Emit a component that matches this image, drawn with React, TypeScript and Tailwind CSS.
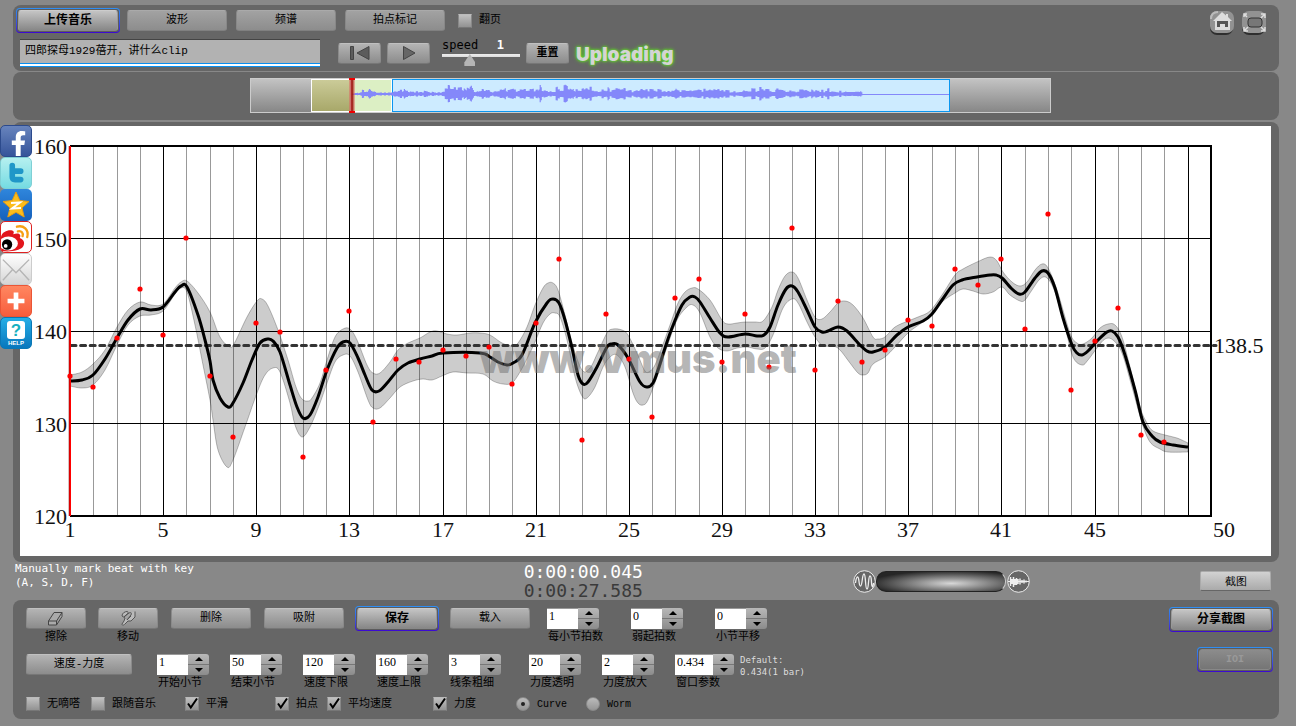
import { useState } from 'react';
import type { ReactNode } from 'react';
import { FaFacebookF } from 'react-icons/fa';

type Point = [number, number];

// Tempo curve, one point every few pixels of the chart
const tempoCurve: Point[] = [
  [70, 381], [82, 380], [93, 375], [105, 359], [117, 338], [128, 320], [140, 309], [151, 310], [163, 307],
  [175, 292], [181, 286], [187, 287], [198, 315], [205, 340], [210, 361], [213, 380], [220, 398], [228, 407],
  [233, 403], [243, 383], [252, 360], [260, 343], [268, 339], [273, 341], [280, 352], [290, 385], [297, 407],
  [303, 418], [310, 415], [318, 397], [327, 370], [337, 348], [343, 342], [350, 343], [358, 358], [365, 375],
  [372, 390], [379, 391], [388, 382], [398, 370], [408, 363], [420, 359], [432, 356], [443, 353], [480, 353],
  [490, 357], [498, 362], [507, 365], [513, 363], [522, 355], [535, 323], [547, 303], [553, 299], [559, 303],
  [565, 320], [572, 348], [578, 375], [583, 384], [588, 382], [597, 367], [607, 347], [612, 344], [618, 345],
  [628, 358], [640, 382], [647, 387], [653, 383], [658, 370], [665, 348], [672, 328], [682, 305], [690, 297],
  [695, 297], [700, 302], [710, 318], [720, 333], [728, 337], [745, 334], [757, 336], [764, 335], [770, 327],
  [778, 305], [786, 289], [792, 286], [798, 292], [807, 310], [815, 327], [822, 332], [828, 331], [838, 327],
  [847, 331], [860, 345], [867, 351], [873, 352], [885, 347], [897, 335], [908, 327], [923, 321], [932, 314],
  [942, 300], [953, 285], [962, 280], [977, 277], [990, 275], [996, 275], [1002, 278], [1012, 289], [1019, 294],
  [1025, 292], [1035, 278], [1042, 271], [1048, 273], [1055, 288], [1063, 318], [1072, 345], [1077, 353],
  [1082, 355], [1088, 351], [1097, 341], [1107, 332], [1112, 331], [1118, 337], [1125, 355], [1135, 390],
  [1143, 422], [1152, 436], [1160, 442], [1173, 445], [1188, 447],
];

// Loudness band around the curve
const bandTop: Point[] = [
  [70, 375], [82, 372], [93, 364], [105, 350], [117, 327], [128, 310], [140, 302], [151, 305], [163, 304],
  [175, 288], [181, 282], [187, 281], [198, 293], [210, 312], [220, 337], [230, 347], [235, 342], [247, 317],
  [257, 301], [262, 299], [268, 306], [278, 330], [288, 360], [296, 387], [302, 399], [308, 401], [312, 398],
  [320, 383], [327, 360], [335, 337], [343, 329], [350, 329], [357, 340], [367, 365], [373, 373], [380, 373],
  [390, 362], [398, 350], [408, 343], [420, 338], [430, 332], [437, 331], [447, 334], [457, 335], [470, 333],
  [480, 333], [490, 335], [502, 343], [512, 346], [518, 343], [527, 327], [535, 305], [543, 288], [548, 283],
  [553, 283], [558, 290], [565, 315], [572, 343], [582, 370], [590, 368], [598, 352], [607, 333], [613, 329],
  [622, 330], [628, 335], [637, 353], [645, 371], [650, 371], [655, 365], [662, 347], [670, 325], [678, 303],
  [685, 292], [692, 288], [698, 289], [710, 300], [722, 320], [728, 324], [737, 323], [745, 322], [755, 322],
  [763, 321], [772, 307], [778, 290], [785, 276], [792, 272], [798, 278], [807, 300], [815, 317], [822, 319],
  [830, 312], [838, 303], [845, 301], [853, 305], [863, 318], [873, 337], [878, 339], [885, 337], [895, 327],
  [908, 321], [918, 317], [930, 311], [942, 295], [955, 275], [963, 269], [977, 262], [990, 257], [997, 261],
  [1003, 272], [1012, 282], [1020, 286], [1027, 282], [1035, 270], [1042, 264], [1048, 268], [1057, 290],
  [1070, 333], [1077, 343], [1083, 344], [1092, 338], [1100, 328], [1108, 324], [1115, 325], [1122, 337],
  [1130, 367], [1140, 407], [1147, 423], [1153, 431], [1165, 435], [1177, 438], [1188, 443],
];

const bandBottom: Point[] = [
  [70, 386], [82, 388], [93, 385], [105, 370], [117, 345], [128, 325], [140, 316], [151, 315], [163, 311],
  [175, 294], [181, 288], [187, 292], [195, 325], [202, 360], [210, 400], [213, 420], [218, 450], [227, 467],
  [233, 460], [245, 427], [257, 393], [265, 375], [273, 368], [280, 372], [290, 403], [295, 425], [302, 437],
  [310, 427], [320, 403], [327, 383], [335, 362], [343, 355], [350, 356], [358, 372], [368, 400], [373, 408],
  [380, 408], [390, 398], [400, 387], [413, 381], [423, 379], [432, 380], [442, 376], [453, 372], [467, 373],
  [483, 374], [493, 381], [503, 384], [512, 383], [520, 372], [528, 357], [535, 342], [543, 323], [550, 314],
  [555, 313], [560, 317], [567, 340], [575, 377], [582, 396], [587, 398], [595, 387], [603, 367], [610, 357],
  [617, 355], [625, 367], [633, 393], [638, 403], [643, 405], [648, 400], [657, 377], [667, 347], [677, 320],
  [687, 307], [693, 305], [700, 313], [710, 337], [718, 348], [727, 351], [737, 348], [747, 347], [757, 349],
  [765, 348], [773, 335], [783, 308], [792, 299], [798, 303], [807, 322], [815, 337], [823, 346], [833, 346],
  [840, 350], [850, 363], [858, 373], [863, 375], [868, 373], [873, 364], [885, 357], [895, 347], [908, 333],
  [920, 324], [930, 317], [942, 302], [955, 293], [963, 289], [973, 291], [983, 294], [993, 292], [1002, 287],
  [1010, 295], [1020, 301], [1025, 300], [1032, 290], [1040, 279], [1047, 278], [1055, 292], [1065, 327],
  [1073, 357], [1082, 365], [1088, 360], [1097, 348], [1105, 339], [1113, 340], [1122, 353], [1132, 387],
  [1142, 423], [1150, 442], [1160, 449], [1168, 452], [1188, 452],
];

// Measured beat of bars 1 to 48
const beats = [
  376, 387, 338, 289, 335, 238, 376, 437, 323, 332, 457, 370, 311, 422, 359, 362, 350, 356, 347, 384, 323, 259, 440,
  314, 359, 417, 298, 279, 362, 314, 367, 228, 370, 301, 362, 350, 320, 326, 269, 285, 259, 329, 214, 390, 341, 308,
  435, 442,
];

const bars = Array.from({ length: 49 }, (_, i) => i + 1);
const barX = (bar: number) => Math.round(70 + ((bar - 1) * 1141) / 49);

function smooth(points: Point[]) {
  return points
    .map(([x, y], i) => {
      if (i === 0) return `${x} ${y}`;
      const [px, py] = points[i - 1];
      const [ax, ay] = points[i - 2] ?? points[0];
      const [nx, ny] = points[i + 1] ?? points[i];
      return `C${px + (x - ax) / 6} ${py + (y - ay) / 6} ${x - (nx - px) / 6} ${y - (ny - py) / 6} ${x} ${y}`;
    })
    .join(' ');
}

const bandPath = `M${smooth(bandTop)} L${smooth([...bandBottom].reverse())} Z`;

// Loudness envelope of the clip: [x, half height]
const envelope: Point[] = [
  [0, 0], [7, 1], [10, 4], [15, 3], [18, 4], [24, 1], [38, 1], [42, 3], [50, 4], [60, 2], [72, 3], [85, 1], [92, 2],
  [94, 9], [100, 7], [110, 7], [114, 3], [116, 8], [124, 2], [129, 7], [140, 3], [165, 5], [180, 4], [188, 6],
  [200, 3], [213, 8], [220, 4], [228, 4], [234, 6], [245, 4], [266, 5], [280, 3], [292, 5], [315, 3], [325, 4],
  [340, 3], [360, 6], [375, 3], [390, 3], [400, 5], [420, 4], [440, 3], [450, 4], [460, 3], [480, 4], [495, 2],
  [507, 2], [509, 4], [511, 0],
];

function waveform() {
  let d = '';
  let k = 0;
  for (let x = 0; x <= 510; x++) {
    while (envelope[k + 1][0] < x) k++;
    const [x0, a0] = envelope[k];
    const [x1, a1] = envelope[k + 1];
    const level = a0 + ((a1 - a0) * (x - x0)) / (x1 - x0);
    const noise = Math.abs((Math.sin(Math.floor(x / 2) * 127.1) * 4375.5) % 1);
    const spike = x % 17 < 2 ? 1.3 : 1;
    const up = level * spike * (0.35 + 0.75 * noise);
    const down = level * spike * (0.35 + 0.65 * noise);
    d += `M${x + 0.5} ${14.5 - up}V${15.5 + down}`;
  }
  return d;
}

const face = 'bg-linear-to-b from-[#b4b4b4] to-[#8c8c8c] border border-t-[#c0c0c0] border-x-[#8a8a8a] border-b-[#777]';
const dull = 'bg-linear-to-b from-[#a2a2a2] to-[#8d8d8d] border border-t-[#aaa] border-x-[#888] border-b-[#808080]';
const bright = 'bg-linear-to-b from-[#c4c4c4] to-[#888] border border-t-[#ccc] border-x-[#999] border-b-[#888] font-bold text-[12px]';

function Btn({ children, className }: { children: ReactNode; className: string }) {
  return (
    <button className={`flex h-[21px] shrink-0 items-center justify-center rounded-[3px] leading-none ${className}`}>
      {children}
    </button>
  );
}

// Blue rim of the highlighted buttons
function Glow({ children }: { children: ReactNode }) {
  return (
    <div className="-m-0.5 h-[25px] shrink-0 rounded bg-linear-to-b from-[#2e90f5] to-[#3c00d2] p-px">
      <div className="rounded-[3px] bg-[#5c5c5c] p-px">{children}</div>
    </div>
  );
}

function Stepper({ id, label, value, wide }: { id: string; label: string; value: string; wide?: boolean }) {
  const [text, setText] = useState(value);
  const step = (by: number) => setText(String(Number(text) + by));
  return (
    <div className="shrink-0">
      <div className="flex h-[21px]">
        <input
          id={id}
          value={text}
          onChange={(e) => setText(e.target.value)}
          className={`${wide ? 'w-[38px]' : 'w-[31px]'} border-t border-[#999] bg-white pb-1.5 pl-0.5 font-['Liberation_Serif',serif] text-[12px] text-black outline-none`}
        />
        <div className="flex w-[21px] flex-col overflow-hidden rounded-r-[3px] bg-linear-to-b from-[#b8b8b8] to-[#8c8c8c]">
          <button aria-label={`${label} +`} onClick={() => step(1)} className="flex flex-1 items-center justify-center border-b border-[#777]">
            <svg width="8" height="4" viewBox="0 0 8 4"><path d="M0 4 4 0l4 4z" /></svg>
          </button>
          <button aria-label={`${label} -`} onClick={() => step(-1)} className="flex flex-1 items-center justify-center">
            <svg width="8" height="4" viewBox="0 0 8 4"><path d="m0 0 4 4 4-4z" /></svg>
          </button>
        </div>
      </div>
      <label htmlFor={id} className="mt-px block h-3.5 w-0 pl-px leading-[14px] whitespace-nowrap">{label}</label>
    </div>
  );
}

function Check({ label, checked, width }: { label: string; checked?: boolean; width: string }) {
  return (
    <label className={`flex h-3.5 shrink-0 items-center gap-[7px] whitespace-nowrap ${width}`}>
      <span className="grid size-3.5 shrink-0">
        <input
          type="checkbox"
          defaultChecked={checked}
          className="peer col-start-1 row-start-1 size-3.5 appearance-none border border-t-[#bbb] border-x-[#888] border-b-[#777] bg-linear-to-b from-[#c0c0c0] to-[#929292]"
        />
        <svg viewBox="0 0 14 14" className="pointer-events-none invisible col-start-1 row-start-1 size-3.5 peer-checked:visible">
          <path d="M3 6.500 5.800 10.500 12 1.500" fill="none" stroke="#000" strokeWidth="2" />
        </svg>
      </span>
      {label}
    </label>
  );
}

function Radio({ label, checked, width }: { label: string; checked?: boolean; width: string }) {
  return (
    <label className={`flex h-3.5 shrink-0 items-center gap-[7px] text-[10px] ${width}`}>
      <span className="grid size-3.5 shrink-0 place-items-center">
        <input
          type="radio"
          name="view"
          defaultChecked={checked}
          className="peer col-start-1 row-start-1 size-3.5 appearance-none rounded-full border border-[#8a8a8a] bg-linear-to-b from-[#bbb] to-[#959595]"
        />
        <span className="pointer-events-none invisible col-start-1 row-start-1 size-1 rounded-full bg-[#222] peer-checked:visible" />
      </span>
      {label}
    </label>
  );
}

function Header() {
  return (
    <header className="flex justify-between rounded-lg bg-[#666] pt-[5px] pr-3 pb-1 pl-[5px]">
      <div>
        <div className="flex items-center gap-[9px]">
          <Glow>
            <Btn className={`w-25 ${bright}`}>上传音乐</Btn>
          </Glow>
          <Btn className={`w-25 ${dull}`}>波形</Btn>
          <Btn className={`w-25 ${dull}`}>频谱</Btn>
          <Btn className={`w-25 ${dull}`}>拍点标记</Btn>
          <div className="pl-1">
            <Check label="翻页" width="w-[50px]" />
          </div>
        </div>
        <div className="mt-2 flex h-7 items-center pl-0.5">
          <input
            aria-label="音乐名称"
            defaultValue="四郎探母1929蓓开，讲什么clip"
            className="h-7 w-75 border-t border-b border-t-[#444] border-b-[#0a8fef] bg-[#b2b2b2] pb-2 pl-[5px] text-[11px] shadow-[inset_0_-2px_0_#fff,inset_0_-3px_0_#0a8fef] outline-none"
          />
          <Btn className={`ml-[18px] w-[43px] ${face}`}>
            <svg width="22" height="16" viewBox="0 0 22 16" fill="#5c5c5c" stroke="#444">
              <path d="M1.500 1.500h3v13h-3zM20 1.500v13L8 8z" />
            </svg>
          </Btn>
          <Btn className={`ml-1.5 w-[43px] ${face}`}>
            <svg width="14" height="16" viewBox="0 0 14 16" fill="#666" stroke="#444">
              <path d="M1.500 1.500v13L13 8z" />
            </svg>
          </Btn>
          <div className="ml-3 w-[78px]">
            <div className="mb-1 flex justify-between pr-4 font-['DejaVu_Sans_Mono',monospace] text-[12px] leading-[10px]">
              <label htmlFor="speed">speed</label>
              <span className="font-bold text-white">1</span>
            </div>
            <input
              id="speed"
              type="range"
              min="0.5"
              max="2"
              step="0.1"
              defaultValue="1"
              className="block h-3 w-full appearance-none bg-linear-to-b from-[#eee] to-[#ddd] bg-[length:100%_3px] bg-top bg-no-repeat [&::-webkit-slider-thumb]:h-3 [&::-webkit-slider-thumb]:w-[11px] [&::-webkit-slider-thumb]:appearance-none [&::-webkit-slider-thumb]:bg-[#b5b5b5] [&::-webkit-slider-thumb]:[clip-path:polygon(50%_0,100%_70%,100%_100%,0_100%,0_70%)]"
            />
          </div>
          <Btn className={`ml-1.5 w-[43px] font-bold ${face}`}>重置</Btn>
          <span className="ml-[7px] pt-1 font-['Inter',sans-serif] text-[19px] font-black text-[#d4d4d4] [text-shadow:0_0_2px_#5fd02a,0_0_3px_#5fd02a,0_0_4px_#5fd02a]">
            Uploading
          </span>
        </div>
      </div>
      <nav className="flex gap-1.5">
        <a href="#home" aria-label="Home" className="size-[26px]">
          <svg viewBox="0 0 26 26">
            <rect x="1" y="3" width="23" height="22" rx="7" fill="#2e2e2e" />
            <rect x="1" y="1" width="24" height="22" rx="7" fill="#929292" />
            <path d="M2 9c0-5 3-7 7-7" fill="none" stroke="#bbb" strokeWidth="2" />
            <path d="M13 2 4 11h2v9h15v-9h2l-4-4V4h-2v1.500z" fill="#ddd" />
            <path d="M8 11h11v6h-3v-3h-5v3H8z" fill="#555" />
          </svg>
        </a>
        <a href="#fullscreen" aria-label="Fullscreen" className="size-[26px]">
          <svg viewBox="0 0 26 26" fill="none">
            <rect x="1" y="3" width="23" height="22" rx="7" fill="#2e2e2e" />
            <rect x="1" y="1" width="24" height="22" rx="7" fill="#929292" />
            <rect x="7" y="8" width="14" height="9" rx="3" fill="#777" stroke="#333" />
            <path d="M3 7V4h3M3 4l3 3M20 4h4v4M24 4l-4 4M3 17v4h4M3 21l4-4M20 21h4v-4M24 21l-4-4" stroke="#ddd" strokeWidth="1.500" />
          </svg>
        </a>
      </nav>
    </header>
  );
}

function Overview() {
  return (
    <section className="mt-px rounded-lg bg-[#666] pt-1.5 pb-[7px]">
      <div className="relative ml-[18.7%] flex h-[35px] w-[63.3%] border border-[#ccc] bg-linear-to-b from-[#c3c3c3] to-[#878787]">
        <div className="w-[7.6%]" />
        <div className="w-[5%] border border-white bg-linear-to-b from-[#cbcb98] to-[#a8a86a]" />
        <div className="w-[5.1%] border border-white bg-[#dcefc4]" />
        <div className="w-[69.8%] border border-[#0a96f0] bg-[#cdebff]" />
        <svg viewBox="0 0 598 33" preserveAspectRatio="none" className="absolute inset-y-0 left-[12.7%] h-full w-[74.7%]">
          <path d="M0 15.500H598" stroke="#8488fa" />
          <path d={waveform()} stroke="#8488fa" strokeWidth="1.200" />
        </svg>
        <div className="absolute -inset-y-px left-[12.3%] w-1.5 border-y-2 border-[#e00] bg-linear-to-r from-[#f88]/40 via-[#900] to-[#f88]/40" />
      </div>
    </section>
  );
}

function Chart() {
  return (
    <section className="mt-0.5 rounded-lg bg-[#666] pt-1 pr-2 pb-1.5 pl-[7px]">
      <svg viewBox="20 126 1251 430" className="block h-auto w-full bg-white font-['Liberation_Serif',serif] text-[22px]">
        {bars.map((bar) => (
          <path
            key={bar}
            d={`M${barX(bar) + 0.5} 147V516`}
            stroke={bar % 4 === 1 ? '#000' : '#999'}
          />
        ))}
        {[150, 140, 130].map((bpm, i) => (
          <path key={bpm} d={`M70 ${[238.5, 331.5, 423.5][i]}H1211`} stroke="#000" />
        ))}
        <path d="M70 146H1211V516H70" fill="none" stroke="#000" strokeWidth="2" />
        <path d={bandPath} fill="#000" fillOpacity="0.2" stroke="#000" strokeOpacity="0.25" />
        <path d="M71 345.500H1216" stroke="#333" strokeWidth="3" strokeDasharray="5 4.600" strokeLinecap="round" />
        <path d={`M${smooth(tempoCurve)}`} fill="none" stroke="#000" strokeWidth="3" />
        <path d="M70 146V516" stroke="#f00" strokeWidth="2" />
        <path d="M69 146V516" stroke="#600" strokeWidth="0.500" />
        {beats.map((y, i) => (
          <circle key={i} cx={barX(i + 1)} cy={y} r="2.600" fill="#f00" />
        ))}
        {[160, 150, 140, 130, 120].map((bpm, i) => (
          <text key={bpm} x="67" y={154 + i * 92.5} textAnchor="end" fill="#111">{bpm}</text>
        ))}
        {bars.filter((bar) => bar % 4 === 1 && bar < 49).map((bar) => (
          <text key={bar} x={barX(bar)} y="537" textAnchor="middle" fill="#111">{bar}</text>
        ))}
        <text x="1224" y="537" textAnchor="middle" fill="#111">50</text>
        <text x="1214" y="353" fill="#111">138.5</text>
        <text x="638" y="373" textAnchor="middle" fill="#777" fillOpacity="0.550" className="font-['Inter',sans-serif] text-[40px] font-black">
          www.Vmus.net
        </text>
      </svg>
    </section>
  );
}

function StatusStrip() {
  return (
    <section className="flex h-[38px] items-center pr-2 pl-0.5 font-['DejaVu_Sans_Mono',monospace]">
      <p className="w-[40.5%] self-start text-[11px] leading-[14px] text-white">
        Manually mark beat with key
        <br />
        (A, S, D, F)
      </p>
      <div className="text-[18px] leading-[19px]">
        <p className="text-white">0:00:00.045</p>
        <p className="text-[#3a3a3a]">0:00:27.585</p>
      </div>
      <div className="mr-[170px] ml-auto flex items-center">
        <svg width="23" height="23" viewBox="0 0 23 23" fill="none" stroke="#eee">
          <circle cx="11.500" cy="11.500" r="10.800" fill="#666" />
          <path d="M2.500 13c.5-4 1-6 2-6 2 0 1 9 3 9S9 4 11 4s1 15 3 15 1-13 3-13 1 8 2 10 1 0 1.500-3" strokeWidth="1.300" />
        </svg>
        <div className="h-[21px] w-[130px] rounded-[10px] border border-[#222] border-r-[#ccc] bg-[radial-gradient(ellipse_at_58%_60%,#d8d8d8_0%,#888_35%,#262626_78%)]" />
        <svg width="23" height="23" viewBox="0 0 23 23" className="ml-px" fill="none" stroke="#eee">
          <circle cx="11.500" cy="11.500" r="10.800" fill="#666" />
          <path d="M1 11.500h21" />
          <path d="M3.500 7v9M5 9v5M6.500 7v10M8 9v6M9.500 8v7M11 9v5M13 8.500v6M15 10v3M17 9.500v4M19 10.500v2" strokeWidth="1.500" />
        </svg>
      </div>
      <button className="h-5 w-[71px] rounded-xs border border-[#aaa] border-b-[#666] bg-linear-to-b from-[#d2d2d2] to-[#aaa] leading-none">截图</button>
    </section>
  );
}

function Controls() {
  return (
    <section className="flex justify-between rounded-lg bg-[#666] pt-2 pr-2 pb-2 pl-[13px]">
      <div>
        <div className="flex h-9">
          <div className="flex gap-3 text-center">
            <div>
              <Btn className={`w-15 ${face}`}>
                <svg width="18" height="15" viewBox="0 0 18 15" fill="#aaa" stroke="#444">
                  <path d="M1.500 10 7 1.500h8L9.500 10zM1.500 10v4h8v-4M9.500 14 15 5.500v-4" />
                </svg>
              </Btn>
              <p className="mt-px leading-[14px]">擦除</p>
            </div>
            <div>
              <Btn className={`w-15 ${face}`}>
                <svg width="18" height="17" viewBox="0 0 18 17" fill="#bbb" stroke="#555">
                  <path d="M3 6c0-3 3-4.500 5-4.500s1 2-1 3.500L5 7l5-4c2-1 3 0 2 2l-4 5M8 10l4-4M3 6l3 2-1 3-2 3c0 2 2 1 3 0l3-3h3l4-4V1.500" />
                </svg>
              </Btn>
              <p className="mt-px leading-[14px]">移动</p>
            </div>
          </div>
          <div className="ml-[13px] flex gap-[13px]">
            <Btn className={`w-20 ${face}`}>删除</Btn>
            <Btn className={`w-20 ${face}`}>吸附</Btn>
            <Glow>
              <Btn className={`w-20 ${bright}`}>保存</Btn>
            </Glow>
            <Btn className={`w-20 ${face}`}>载入</Btn>
          </div>
          <div className="ml-[17px] flex gap-8">
            <Stepper id="beats" label="每小节拍数" value="1" />
            <Stepper id="pickup" label="弱起拍数" value="0" />
            <Stepper id="shift" label="小节平移" value="0" />
          </div>
        </div>
        <div className="mt-2.5 flex h-9">
          <Btn className={`w-[106px] ${face}`}>速度-力度</Btn>
          <div className="ml-[25px] flex gap-[21px]">
            <Stepper id="from" label="开始小节" value="1" />
            <Stepper id="to" label="结束小节" value="50" />
            <Stepper id="low" label="速度下限" value="120" />
            <Stepper id="high" label="速度上限" value="160" />
            <Stepper id="line" label="线条粗细" value="3" />
          </div>
          <div className="ml-7 flex gap-[21px]">
            <Stepper id="opacity" label="力度透明" value="20" />
            <Stepper id="scale" label="力度放大" value="2" />
            <Stepper id="window" label="窗口参数" value="0.434" wide />
          </div>
          <p className="ml-1.5 font-['DejaVu_Sans_Mono',monospace] text-[9px] leading-3 text-[#ddd]">
            Default:
            <br />
            0.434(1 bar)
          </p>
        </div>
        <div className="mt-[7px] flex">
          <Check label="无嘀嗒" width="w-[65px]" />
          <Check label="跟随音乐" width="w-[94px]" />
          <Check label="平滑" width="w-[90px]" checked />
          <Check label="拍点" width="w-[52px]" checked />
          <Check label="平均速度" width="w-[106px]" checked />
          <Check label="力度" width="w-[83px]" checked />
          <Radio label="Curve" width="w-[70px]" checked />
          <Radio label="Worm" width="w-[70px]" />
        </div>
      </div>
      <div className="flex flex-col items-end gap-[19px] pt-px">
        <Glow>
          <Btn className={`w-25 ${bright}`}>分享截图</Btn>
        </Glow>
        <Glow>
          <button
            disabled
            className="block h-[21px] w-[72px] rounded-[3px] border border-[#888] bg-linear-to-b from-[#8c8c8c] to-[#757575] text-[10px] leading-none font-bold text-[#999]"
          >
            IOI
          </button>
        </Glow>
      </div>
    </section>
  );
}

function ShareBar() {
  return (
    <nav className="absolute top-[125px] left-0 flex w-8 flex-col *:size-8 *:overflow-hidden *:rounded-[5px]">
      <a href="#facebook" aria-label="Facebook" className="flex items-end justify-end border border-[#2c4a8c] bg-linear-to-b from-[#6884bd] to-[#36549a] text-white">
        <FaFacebookF size={25} />
      </a>
      <a href="#twitter" aria-label="Twitter" className="border border-[#7fd0d5] bg-linear-to-b from-[#b5f0f0] to-[#74dbe2]">
        <svg viewBox="0 0 32 32" fill="none" stroke="#1f97c8" strokeWidth="6" strokeLinecap="round" strokeLinejoin="round">
          <path d="M12 8v12q0 3 3 3h6M12 14h9" />
        </svg>
      </a>
      <a href="#qzone" aria-label="Qzone" className="bg-linear-to-b from-[#2f86dc] to-[#1560bb]">
        <svg viewBox="0 0 32 32">
          <path d="m16 3 3.800 8.500 9.200 1-7 6.300 2.200 9.200L16 23.300 7.800 28l2.200-9.200-7-6.300 9.200-1z" fill="#fcbd1c" stroke="#e79c10" />
          <path d="m11 14 9-.5-8 6 9-.5" fill="none" stroke="#fff" strokeWidth="2" />
        </svg>
      </a>
      <a href="#weibo" aria-label="Weibo" className="border border-[#d22] bg-white">
        <svg viewBox="0 0 32 32">
          <path d="M0 16c1-6 8-8 12-7 3 1 1 4 1 4 6-2 9 0 7 4 5 2 6 6 3 10-4 4-13 5-23 4z" fill="#e2161d" />
          <ellipse cx="8" cy="23" rx="10" ry="7.500" fill="#fff" />
          <circle cx="6.500" cy="24" r="5.500" fill="#000" />
          <circle cx="5" cy="25.500" r="2" fill="#fff" />
          <path d="M17 5c7-2 13 3 11 11M18 10c4-1 6 2 5 5" fill="none" stroke="#f6a013" strokeWidth="2.500" strokeLinecap="round" />
        </svg>
      </a>
      <a href="#mail" aria-label="Mail" className="border border-[#ccc] bg-linear-to-b from-white to-[#d5d5d5]">
        <svg viewBox="0 0 32 32" fill="none" stroke="#b5b5b5" strokeWidth="1.500">
          <path d="m2 6 14 14L30 6M2 28l10-11M30 28 20 17" />
        </svg>
      </a>
      <a href="#more" aria-label="More" className="border border-[#ea5536] bg-linear-to-b from-[#ff8660] to-[#f75c3c]">
        <svg viewBox="0 0 32 32" stroke="#fff" strokeWidth="5"><path d="M16 7v18M7 16h18" /></svg>
      </a>
      <a href="#help" className="flex flex-col items-center border border-[#0a78b5] bg-linear-to-b from-[#25aee6] to-[#0877bd] pt-[3px] font-['Liberation_Sans',sans-serif] font-bold text-white">
        <span className="flex h-[18px] w-[18px] items-center justify-center rounded-[3px] bg-white text-[17px] leading-none text-[#17b0c0]">?</span>
        <span className="text-[6px] leading-[9px]">HELP</span>
      </a>
    </nav>
  );
}

export default function App() {
  return (
    <div className="relative min-h-screen bg-[#888] pt-[5px] pr-[17px] pb-[7px] pl-[13px] font-['Liberation_Mono','Noto_Sans_CJK_SC',monospace] text-[11px] text-black">
      <Header />
      <Overview />
      <Chart />
      <StatusStrip />
      <Controls />
      <ShareBar />
    </div>
  );
}
